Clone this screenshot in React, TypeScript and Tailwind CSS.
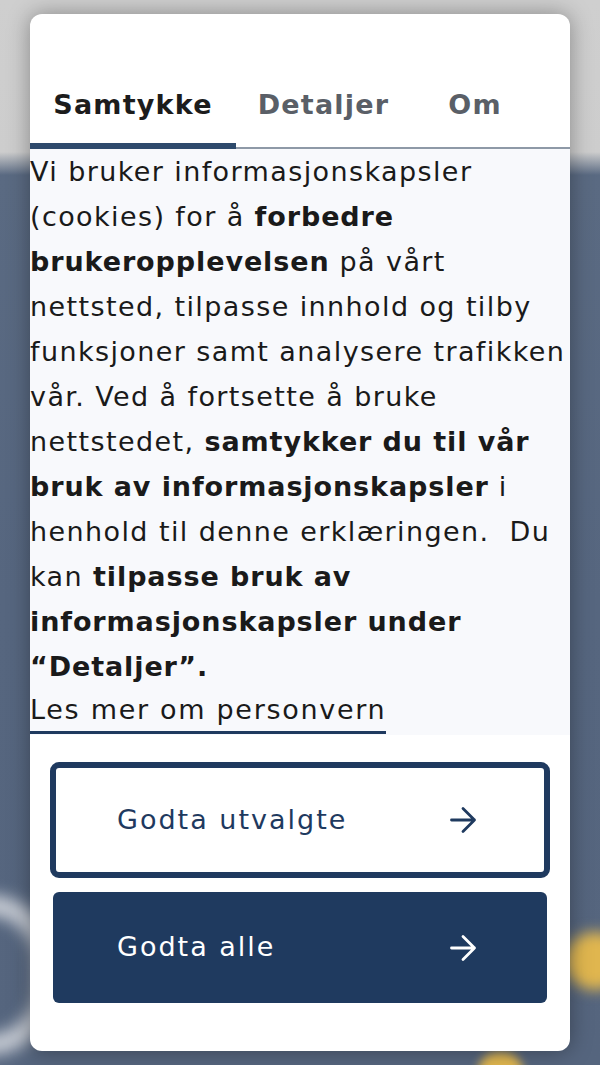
import React from "react";

const FONT = { fontFamily: '"DejaVu Sans", "Noto Sans", sans-serif' };

function Arrow({ color }: { color: string }) {
  return (
    <svg width="28" height="28" viewBox="0 0 28 28" fill="none" aria-hidden="true">
      <path
        d="M2.5 14H25.5M14 2.5L25.5 14L14 25.5"
        stroke={color}
        strokeWidth="2.8"
        strokeLinecap="round"
        strokeLinejoin="round"
      />
    </svg>
  );
}

function B({ children }: { children: React.ReactNode }) {
  return <b className="font-bold tracking-[0.9px]">{children}</b>;
}

export default function App() {
  return (
    <div
      className="relative w-full h-[1065px] overflow-hidden bg-[linear-gradient(to_bottom,#cfcfcf_0px,#cdcdcd_152px,#5a6a82_175px,#56667f_600px,#55657e_100%)]"
      style={FONT}
    >
      {/* decorative background shapes */}
      <div className="absolute left-[-80px] top-[895px] w-[135px] h-[160px] rounded-full border-[20px] border-[#d6d9df] blur-[8px] opacity-90" />
      <div className="absolute left-[565px] top-[932px] w-[60px] h-[58px] rounded-full bg-[#e0b64f] blur-[7px]" />
      <div className="absolute left-[478px] top-[1052px] w-[45px] h-[40px] rounded-full bg-[#e0b64f] blur-[5px]" />

      <div className="relative pt-[14px] px-[30px]">
        <div className="h-[1037px] bg-white rounded-[12px] overflow-hidden shadow-[0_0_22px_rgba(0,0,0,0.35)] flex flex-col">
          {/* Tabs */}
          <div className="flex h-[135px] shrink-0">
            <div className="w-[206px] flex items-end justify-center pb-[20px] border-b-[6px] border-[#2e4a6c]">
              <span className="text-[27px] leading-[36px] font-bold tracking-[1.2px] text-[#1c1c1c]">
                Samtykke
              </span>
            </div>
            <div className="w-[175px] flex items-end justify-center pb-[24px] border-b-[2px] border-[#8e99a7]">
              <span className="text-[27px] leading-[36px] font-bold tracking-[1.2px] text-[#5a5f67]">
                Detaljer
              </span>
            </div>
            <div className="w-[128px] flex items-end justify-center pb-[24px] border-b-[2px] border-[#8e99a7]">
              <span className="text-[27px] leading-[36px] font-bold tracking-[1.2px] text-[#5a5f67]">
                Om
              </span>
            </div>
            <div className="flex-1 border-b-[2px] border-[#8e99a7]" />
          </div>

          {/* Body text */}
          <div className="bg-[#f8f9fc] shrink-0 pb-[1px] text-[#1a1a1a] text-[27px] tracking-[1.4px] whitespace-nowrap">
            <p className="leading-[45px]">
              Vi bruker informasjonskapsler
              <br />
              (cookies) for å <B>forbedre</B>
              <br />
              <B>brukeropplevelsen</B> på vårt
              <br />
              nettsted, tilpasse innhold og tilby
              <br />
              funksjoner samt analysere trafikken
              <br />
              vår. Ved å fortsette å bruke
              <br />
              nettstedet, <B>samtykker du til vår</B>
              <br />
              <B>bruk av informasjonskapsler</B> i
              <br />
              henhold til denne erklæringen.{"\u00a0"} Du
              <br />
              kan <B>tilpasse bruk av</B>
              <br />
              <B>informasjonskapsler under</B>
              <br />
              <B>“Detaljer”.</B>
            </p>
            <a
              href="#"
              className="inline-block leading-[42px] tracking-[1.7px] border-b-[3px] border-[#1f3a5f] text-[#1a1a1a]"
            >
              Les mer om personvern
            </a>
          </div>

          {/* Buttons */}
          <div className="flex flex-col pt-[27px]">
            <button className="mx-[20px] h-[116px] rounded-[9px] border-[6px] border-[#1f3a5f] bg-white flex items-center justify-between pl-[61px] pr-[67px] text-[#1f3a5f]">
              <span className="text-[27px] tracking-[2px]">Godta utvalgte</span>
              <Arrow color="#1f3a5f" />
            </button>
            <button className="mx-[23px] mt-[14px] h-[111px] rounded-[6px] bg-[#1f3a5f] flex items-center justify-between pl-[64px] pr-[70px] text-white">
              <span className="text-[27px] tracking-[2px]">Godta alle</span>
              <Arrow color="#ffffff" />
            </button>
          </div>
        </div>
      </div>
    </div>
  );
}
